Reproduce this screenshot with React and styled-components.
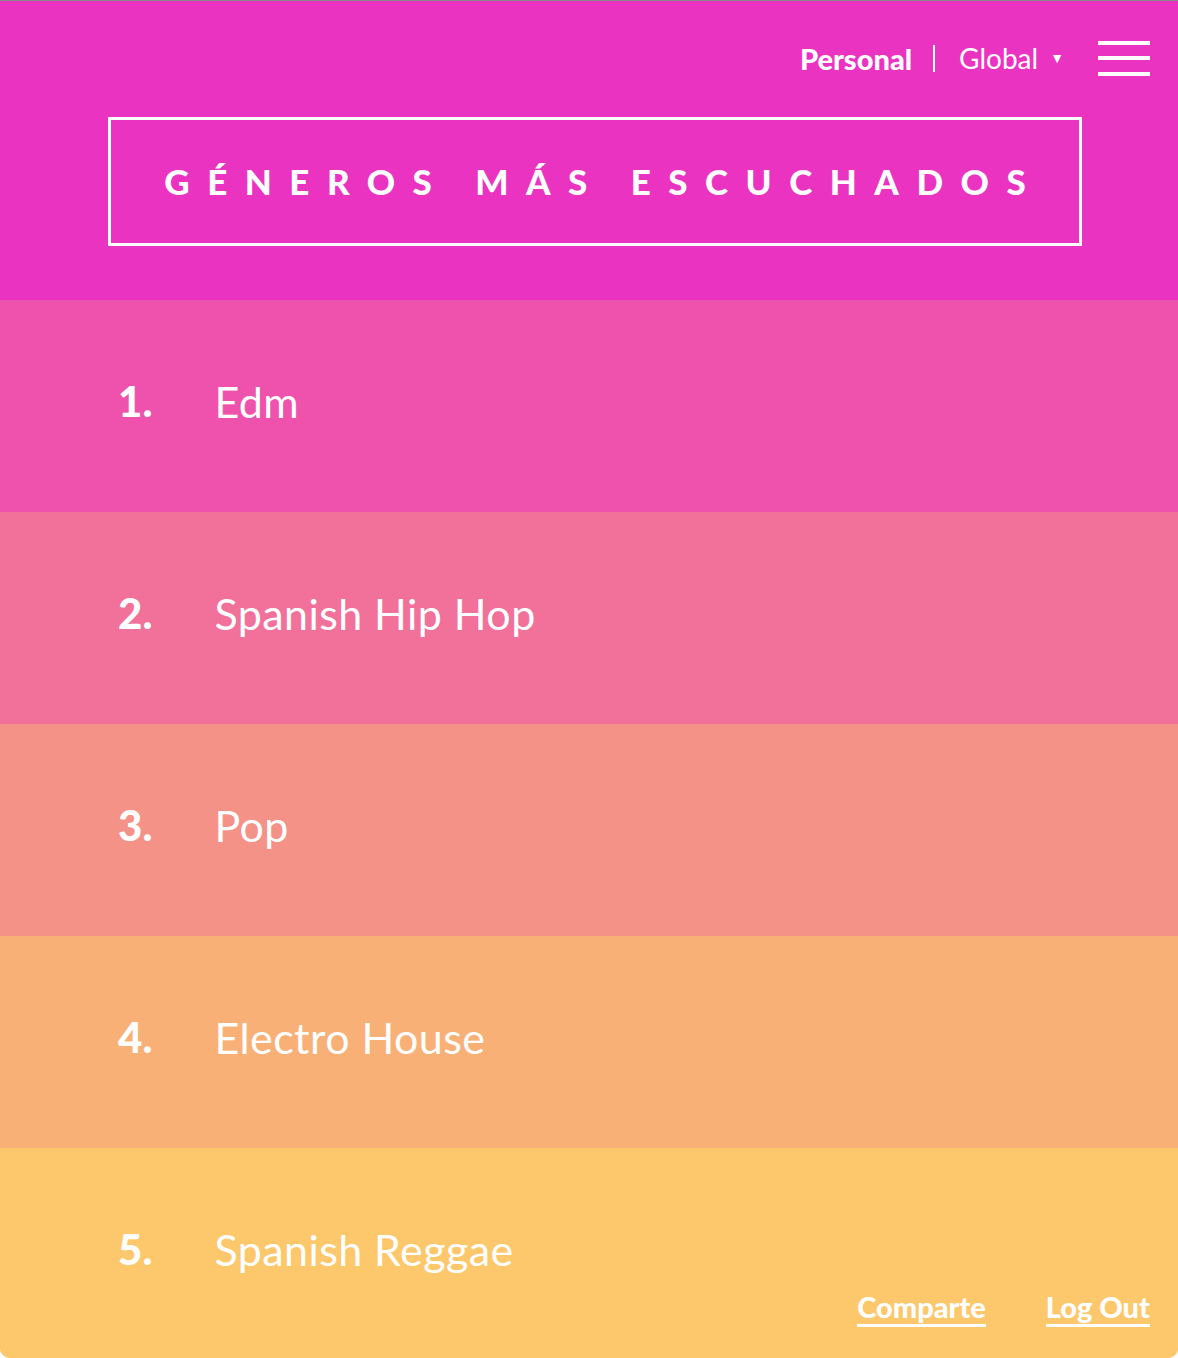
import React from "react";
import styled, { createGlobalStyle } from "styled-components";

const GlobalStyle = createGlobalStyle`
  * { box-sizing: border-box; }
  html, body {
    margin: 0;
    padding: 0;
    background: #ffffff;
  }
  body {
    font-family: "Lato", "Liberation Sans", sans-serif;
    color: #ffffff;
  }
`;

const genres = [
  { name: "Edm", color: "#ef52ac" },
  { name: "Spanish Hip Hop", color: "#f1719a" },
  { name: "Pop", color: "#f59287" },
  { name: "Electro House", color: "#f8b077" },
  { name: "Spanish Reggae", color: "#fdc76b" },
];

const App = () => {
  return (
    <>
      <GlobalStyle />
      <Page>
        <Header>
          <Nav>
            <NavLink active>Personal</NavLink>
            <Divider />
            <NavLink>
              Global <Caret>▼</Caret>
            </NavLink>
            <Burger aria-label="menu">
              <span />
              <span />
              <span />
            </Burger>
          </Nav>
          <TitleBox>
            <h1>GÉNEROS MÁS ESCUCHADOS</h1>
          </TitleBox>
        </Header>
        <List>
          {genres.map((g, i) => (
            <Row key={g.name} bg={g.color}>
              <Rank>{i + 1}.</Rank>
              <Name>{g.name}</Name>
            </Row>
          ))}
        </List>
        <Footer>
          <FooterLink href="#">Comparte</FooterLink>
          <FooterLink href="#">Log Out</FooterLink>
        </Footer>
      </Page>
    </>
  );
};

const Page = styled.div`
  position: relative;
  width: 1178px;
  height: 1358px;
  overflow: hidden;
  border-top: 1px solid #8a8a8a;
  border-radius: 0 0 10px 10px;
  background: #fdc76b;
`;

const Header = styled.header`
  height: 299px;
  background: #eb33c2;
  display: flex;
  flex-direction: column;
  padding: 0 28px 0 108px;
`;

const Nav = styled.nav`
  display: flex;
  align-items: center;
  justify-content: flex-end;
  height: 74px;
  padding-top: 40px;
  margin-bottom: 42px;
`;

const NavLink = styled.span`
  font-size: ${(p) => (p.active ? "29px" : "28px")};
  font-weight: ${(p) => (p.active ? 900 : 400)};
  line-height: 1;
  display: flex;
  align-items: center;
`;

const Caret = styled.span`
  font-size: 14px;
  margin-left: 12px;
`;

const Divider = styled.span`
  width: 2px;
  height: 27px;
  background: #ffffff;
  margin: 0 24px 0 21px;
`;

const Burger = styled.div`
  display: flex;
  flex-direction: column;
  justify-content: space-between;
  width: 52px;
  height: 35px;
  margin-left: 34px;
  span {
    display: block;
    height: 4px;
    background: #ffffff;
  }
`;

const TitleBox = styled.div`
  width: 974px;
  height: 129px;
  border: 3px solid #ffffff;
  display: flex;
  align-items: center;
  justify-content: center;
  h1 {
    margin: 0;
    font-size: 35px;
    font-weight: 900;
    letter-spacing: 0.5em;
    padding-left: 0.5em;
    line-height: 1;
  }
`;

const List = styled.ul`
  list-style: none;
  margin: 0;
  padding: 0;
`;

const Row = styled.li`
  height: 212px;
  background: ${(p) => p.bg};
  display: flex;
  align-items: center;
  padding-left: 118px;
  padding-bottom: 10px;
  gap: 62px;
`;

const Rank = styled.span`
  font-size: 42px;
  font-weight: 900;
`;

const Name = styled.span`
  font-size: 43px;
  font-weight: 400;
  letter-spacing: 0.01em;
`;

const Footer = styled.div`
  position: absolute;
  right: 28px;
  bottom: 31px;
  display: flex;
  gap: 60px;
`;

const FooterLink = styled.a`
  color: #ffffff;
  font-size: 29px;
  font-weight: 900;
  text-decoration: none;
  border-bottom: 3px solid #ffffff;
  padding-bottom: 3px;
  line-height: 1;
`;

export default App;
